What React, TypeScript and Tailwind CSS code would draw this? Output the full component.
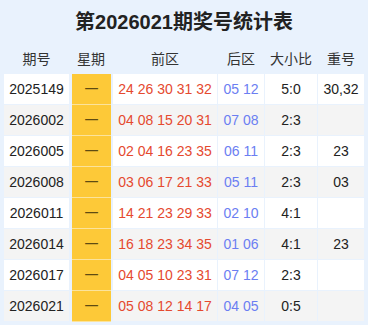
import React from 'react'

type Row = {
  issue: string
  front: string
  back: string
  ratio: string
  repeat: string
}

const ROWS: Row[] = [
  { issue: '2025149', front: '24 26 30 31 32', back: '05 12', ratio: '5:0', repeat: '30,32' },
  { issue: '2026002', front: '04 08 15 20 31', back: '07 08', ratio: '2:3', repeat: '' },
  { issue: '2026005', front: '02 04 16 23 35', back: '06 11', ratio: '2:3', repeat: '23' },
  { issue: '2026008', front: '03 06 17 21 33', back: '05 11', ratio: '2:3', repeat: '03' },
  { issue: '2026011', front: '14 21 23 29 33', back: '02 10', ratio: '4:1', repeat: '' },
  { issue: '2026014', front: '16 18 23 34 35', back: '01 06', ratio: '4:1', repeat: '23' },
  { issue: '2026017', front: '04 05 10 23 31', back: '07 12', ratio: '2:3', repeat: '' },
  { issue: '2026021', front: '05 08 12 14 17', back: '04 05', ratio: '0:5', repeat: '' },
]

const COLS = 'grid grid-cols-[65px_42px_104px_46px_52px_46px] gap-x-px'

export default function App() {
  return (
    <div
      className="w-[368px] h-[325px] bg-[#e9f2fd] px-[4px] text-[#222]"
      style={{ fontFamily: '"Liberation Sans", "Noto Sans CJK SC", sans-serif' }}
    >
      <h1 className="h-[44px] flex items-center justify-center text-[20px] font-bold">
        第2026021期奖号统计表
      </h1>

      <div className={`${COLS} h-[30px] items-center text-center text-[14px] text-[#333]`}>
        <div>期号</div>
        <div>星期</div>
        <div>前区</div>
        <div>后区</div>
        <div>大小比</div>
        <div>重号</div>
      </div>

      {ROWS.map((r, i) => {
        const bg = i % 2 === 0 ? 'bg-white' : 'bg-[#f4f4f4]'
        const cell = `${bg} h-[31px] border-b border-[#e9f2fd] flex items-center justify-center`
        return (
          <div key={r.issue} className={`${COLS} text-[14px]`}>
            <div className={cell}>{r.issue}</div>
            <div className="h-[31px] pl-[2px] pr-px">
              <div className="h-full bg-[#fdc938] border-b border-[#fbe39c] flex items-center justify-center text-[#5e4b12]">
                一
              </div>
            </div>
            <div className={`${cell} text-[#e5492f]`}>{r.front}</div>
            <div className={`${cell} text-[#6b7ef2]`}>{r.back}</div>
            <div className={cell}>{r.ratio}</div>
            <div className={cell}>{r.repeat}</div>
          </div>
        )
      })}
    </div>
  )
}
